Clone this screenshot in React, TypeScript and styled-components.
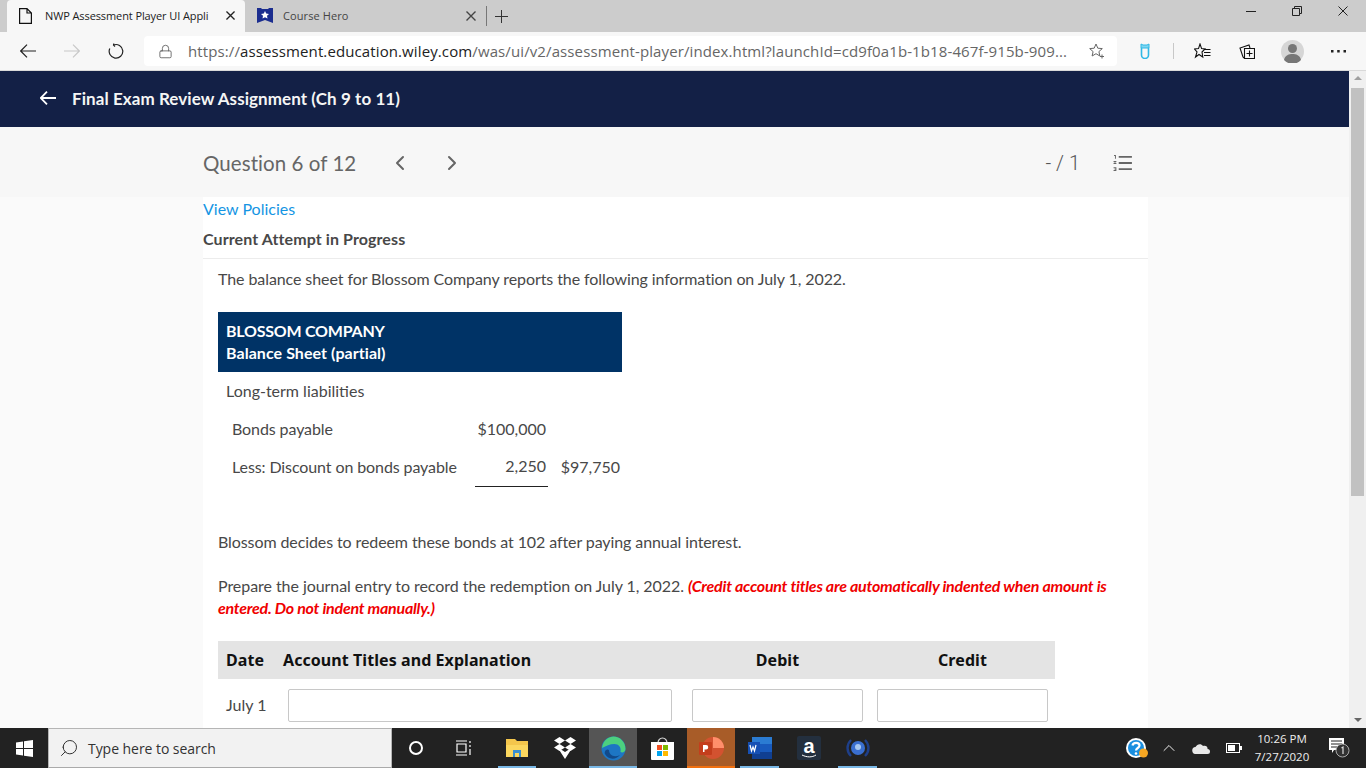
import React from "react";
import styled, { createGlobalStyle } from "styled-components";
import { ChevronLeft, ChevronRight, Lock, ChevronUp, Search } from "lucide-react";

const Global = createGlobalStyle`
  html, body { margin: 0; padding: 0; height: 768px; overflow: hidden; background: #fafafa; }
  * { box-sizing: border-box; }
  #root { width: 1366px; height: 768px; }
`;

const Screen = styled.div`
  width: 1366px;
  height: 768px;
  display: flex;
  flex-direction: column;
  font-family: Lato, "Liberation Sans", sans-serif;
  color: #484848;
`;

/* browser chrome */
const TabStrip = styled.div`
  height: 32px;
  background: #cccccc;
  display: flex;
  align-items: flex-end;
  padding-left: 7px;
  font-family: "Open Sans", "Liberation Sans", sans-serif;
  font-size: 11px;
`;

const Tab = styled.div<{ $active?: boolean }>`
  width: ${(p) => (p.$active ? 238 : 241)}px;
  height: 32px;
  display: flex;
  align-items: center;
  padding: 0 ${(p) => (p.$active ? 10 : 10)}px 1px 12px;
  border-radius: 4px 4px 0 0;
  background: ${(p) => (p.$active ? "#f7f7f7" : "transparent")};
  color: ${(p) => (p.$active ? "#222" : "#444")};
  letter-spacing: ${(p) => (p.$active ? -0.1 : 0.1)}px;
`;

const TabTitle = styled.span<{ $offset: number }>`
  flex: 1;
  margin-left: ${(p) => p.$offset}px;
  white-space: nowrap;
  overflow: hidden;
`;

const NewTab = styled.div`
  display: flex;
  align-items: center;
  height: 20px;
  margin-bottom: 6px;
  padding-left: 7px;
  border-left: 1px solid #777;
`;

const WindowButtons = styled.div`
  margin-left: auto;
  height: 32px;
  display: flex;
  align-items: flex-start;
  gap: 36px;
  padding: 6px 18px 0 0;
`;

const NavBar = styled.div`
  height: 39px;
  background: #f7f7f7;
  border-bottom: 1px solid #d9d9d9;
  display: flex;
  align-items: center;
  padding-left: 20px;
`;

const NavIcons = styled.div`
  width: 124px;
  display: flex;
  align-items: center;
  gap: 28px;
`;

const AddressBox = styled.div`
  width: 973px;
  height: 30px;
  background: #fff;
  border-radius: 4px;
  display: flex;
  align-items: center;
  padding: 0 12px 0 14px;
  font-family: "Open Sans", "Liberation Sans", sans-serif;
  font-size: 15px;
  color: #222;
  white-space: nowrap;
`;

const Url = styled.span`
  margin-left: 15px;
  flex: 1;
  letter-spacing: 0.11px;
  span { color: #666; }
`;

const Tools = styled.div`
  flex: 1;
  display: flex;
  align-items: center;
  padding-left: 23px;
`;

const Divider = styled.div`
  width: 1px;
  height: 16px;
  background: #c8c8c8;
  margin: 0 20px 0 23px;
`;

const Avatar = styled.div`
  width: 23px;
  height: 23px;
  margin-left: 26px;
`;

const MoreDots = styled.div`
  margin-left: 27px;
  display: flex;
`;

/* page */
const Viewport = styled.div`
  flex: 1;
  display: flex;
  min-height: 0;
  overflow: hidden;
`;

const Page = styled.div`
  width: 1349px;
  background: #fafafa;
`;

const Banner = styled.header`
  height: 56px;
  padding-bottom: 2px;
  background: #132046;
  display: flex;
  align-items: center;
  padding-left: 40px;
  color: #f5f5f5;
  font-size: 17px;
  font-weight: 700;
  letter-spacing: 0.07px;
  gap: 16px;
`;

const QuestionBar = styled.div`
  height: 70px;
  background: #f7f7f7;
  display: flex;
  align-items: center;
  padding: 2px 0 0 203px;
  color: #666;
`;

const QuestionTitle = styled.div`
  font-size: 20.5px;
  width: 185px;
  letter-spacing: 0.06px;
`;

const Pager = styled.div`
  display: flex;
  gap: 28px;
`;

const Score = styled.div`
  margin-left: auto;
  font-family: Roboto, "Liberation Sans", sans-serif;
  font-size: 20px;
  font-weight: 300;
  color: #555;
`;

const ListIcon = styled.div`
  margin: 0 217px 0 33px;
  display: flex;
`;

const Content = styled.main`
  margin-left: 203px;
  width: 945px;
  background: #fff;
  height: 600px;
  font-size: 16px;
`;

const PolicyLink = styled.a`
  display: block;
  color: #1595e3;
  line-height: 24px;
  height: 27px;
`;

const Attempt = styled.div`
  font-weight: 700;
  color: #484848;
  font-size: 16px;
  letter-spacing: 0.1px;
  line-height: 24px;
  height: 35px;
  padding-top: 3px;
  border-bottom: 1px solid #ececec;
`;

const Body = styled.div`
  padding: 9px 0 0 15px;
`;

const Para = styled.p<{ $track: number }>`
  margin: 0 0 22px;
  line-height: 22px;
  width: 900px;
  letter-spacing: ${(p) => p.$track}px;
`;

const Red = styled.em`
  color: #f00000;
  font-weight: 700;
  letter-spacing: -0.25px;
`;

const SheetHead = styled.div`
  width: 404px;
  height: 60px;
  background: #003366;
  color: #fff;
  font-weight: 700;
  padding: 8px 8px 0;
  line-height: 22px;
`;

const SheetLine = styled.div<{ $track: number }>`
  letter-spacing: ${(p) => p.$track}px;
`;

const SheetTable = styled.table`
  border-collapse: collapse;
  width: 404px;
  margin-bottom: 44px;
  td { padding: 0 0 2px; height: 38px; }
`;

const Caption = styled.td`
  padding-left: 8px !important;
`;

const RowLabel = styled.td`
  padding-left: 14px !important;
  width: 257px;
  letter-spacing: -0.1px;
`;

const Amount = styled.td<{ $rule?: boolean }>`
  width: 73px;
  text-align: right;
  padding-right: 2px !important;
  border-bottom: ${(p) => (p.$rule ? "1px solid #222" : "none")};
`;

const Total = styled.td`
  text-align: right;
  padding-right: 2px !important;
`;

const EntryHead = styled.div`
  width: 837px;
  height: 38px;
  background: #e4e4e4;
  display: grid;
  grid-template-columns: 65px 402px 185px 185px;
  align-items: center;
  font-family: "Noto Sans", Lato, sans-serif;
  font-size: 16px;
  font-weight: 700;
  letter-spacing: 0.07px;
  color: #111;
`;

const HeadCell = styled.div<{ $center?: boolean; $pad?: number }>`
  text-align: ${(p) => (p.$center ? "center" : "left")};
  padding-left: ${(p) => p.$pad ?? 0}px;
`;

const EntryInput = styled.div<{ $w: number }>`
  width: ${(p) => p.$w}px;
  height: 33px;
  border: 1px solid #c8c8c8;
  border-radius: 2px;
  background: #fff;
`;

const InputRow = styled.div`
  display: flex;
  align-items: center;
  height: 33px;
  margin-top: 10px;
  padding-left: 8px;
`;

const DateText = styled.div`
  width: 62px;
  padding-bottom: 2px;
`;

const Gap = styled.div<{ $w: number }>`
  width: ${(p) => p.$w}px;
  flex: none;
`;

/* scrollbar */
const Scrollbar = styled.div`
  width: 17px;
  background: #f0f0f0;
  display: flex;
  flex-direction: column;
  align-items: center;
  padding-top: 5px;
`;

const Thumb = styled.div`
  width: 13px;
  height: 408px;
  margin-top: 8px;
  background: #c1c1c1;
`;

const Arrow = styled.div<{ $down?: boolean }>`
  width: 0;
  height: 0;
  border-left: 4px solid transparent;
  border-right: 4px solid transparent;
  ${(p) => (p.$down ? "border-top: 4px solid #666; margin-top: auto; margin-bottom: 6px;" : "border-bottom: 4px solid #a0a0a0;")}
`;

/* taskbar */
const Taskbar = styled.footer`
  height: 40px;
  background: #222222;
  display: flex;
  align-items: stretch;
  color: #fff;
`;

const StartSlot = styled.div`
  width: 48px;
  display: flex;
  align-items: center;
  justify-content: center;
`;

const SearchBox = styled.div`
  width: 344px;
  background: #f2f2f2;
  border: 1px solid #b5b5b5;
  border-bottom-color: #aaa;
  display: flex;
  align-items: center;
  padding-left: 10px;
  gap: 9px;
  color: #333;
  font-family: "Open Sans", "Liberation Sans", sans-serif;
  font-size: 14px;
  letter-spacing: -0.05px;
`;

const SearchGlyph = styled(Search)`
  transform: scaleX(-1);
`;

const TaskSlot = styled.div<{ $w?: number; $bg?: string; $under?: string; $inset?: number }>`
  width: ${(p) => p.$w ?? 48}px;
  background: ${(p) => p.$bg ?? "transparent"};
  display: flex;
  align-items: center;
  justify-content: center;
  position: relative;
  &::after {
    content: "";
    position: absolute;
    left: ${(p) => p.$inset ?? 0}px;
    right: ${(p) => p.$inset ?? 0}px;
    bottom: 0;
    height: 2px;
    background: ${(p) => p.$under ?? "transparent"};
  }
`;

const Tray = styled.div`
  margin-left: auto;
  display: flex;
  align-items: center;
`;

const Clock = styled.div`
  width: 64px;
  text-align: center;
  font-family: "Open Sans", "Liberation Sans", sans-serif;
  font-size: 11.5px;
  line-height: 18px;
  color: #eee;
`;

const TrayIcon = styled.div<{ $w: number }>`
  width: ${(p) => p.$w}px;
  display: flex;
  justify-content: center;
  align-items: center;
`;

const urlTail = "/was/ui/v2/assessment-player/index.html?launchId=cd9f0a1b-1b18-467f-915b-909...";

const ArrowGlyph = ({ color, right, w = 1.2 }: { color: string; right?: boolean; w?: number }) => (
  <svg width="16" height="14" viewBox="0 0 16 14" fill="none" stroke={color} strokeWidth={w}>
    <path d={right ? "M0 7h15.200M9 .7 15.300 7 9 13.300" : "M16 7H.8M7 .7.7 7 7 13.300"} />
  </svg>
);

const Cross = ({ size, color, w }: { size: number; color: string; w: number }) => (
  <svg width={size} height={size} viewBox="0 0 10 10" fill="none" stroke={color} strokeWidth={w}>
    <path d="M.5.5l9 9M9.500.5l-9 9" />
  </svg>
);

export default function App() {
  return (
    <Screen>
      <Global />
      <TabStrip>
        <Tab $active>
          <svg width="13" height="16" viewBox="0 0 13 16" fill="none" stroke="#111" strokeWidth="1.2">
            <path d="M.6.6h7.400l4.400 4.400v10.400H.6zM8 .6V5h4.400" />
          </svg>
          <TabTitle $offset={13}>NWP Assessment Player UI Appli</TabTitle>
          <Cross size={9} color="#222" w={1.5} />
        </Tab>
        <Tab>
          <svg width="16" height="15" viewBox="0 0 16 15">
            <path d="M0 0h4l1 1h6l1-1h4v15l-8-3-8 3z" fill="#1b2d8f" />
            <path d="M8 3l1.200 2.600 2.800.3-2 1.900.5 2.800L8 9.200 5.500 10.600l.5-2.800-2-1.900 2.800-.3z" fill="#fff" />
          </svg>
          <TabTitle $offset={10}>Course Hero</TabTitle>
          <Cross size={10} color="#444" w={1.4} />
        </Tab>
        <NewTab>
          <svg width="15" height="15" viewBox="0 0 15 15" fill="none" stroke="#333">
            <path d="M7.500 1v13M1 7.500h13" />
          </svg>
        </NewTab>
        <WindowButtons>
          <svg width="10" height="10" viewBox="0 0 10 10" stroke="#222">
            <path d="M0 5.500h10" />
          </svg>
          <svg width="10" height="10" viewBox="0 0 10 10" fill="none" stroke="#222">
            <path d="M.5 2.500h7v7h-7zM2.500 2.500v-2h7v7h-2" />
          </svg>
          <Cross size={10} color="#222" w={1} />
        </WindowButtons>
      </TabStrip>

      <NavBar>
        <NavIcons>
          <ArrowGlyph color="#222" />
          <ArrowGlyph color="#c8c8c8" right />
          <svg width="16" height="16" viewBox="0 0 16 16" fill="none" stroke="#222" strokeWidth="1.2">
            <path d="M5.500 2a6.800 6.800 0 1 1-3.700 3.500M5.800.5 5.500 2 7 3.500" />
          </svg>
        </NavIcons>
        <AddressBox>
          <Lock size={15} color="#555" strokeWidth={1.3} />
          <Url>
            <span>https://</span>assessment.education.wiley.com<span>{urlTail}</span>
          </Url>
          <svg width="16" height="16" viewBox="0 0 16 16" fill="none" stroke="#666" strokeWidth="1">
            <path d="M7 1l1.800 4.200 4.500.4-3.400 3 1 4.400L7 10.700 3.100 13l1-4.400-3.400-3 4.500-.4z" />
            <path d="M13 11.500v4M11 13.500h4" />
          </svg>
        </AddressBox>
        <Tools>
          <svg width="10" height="16" viewBox="0 0 10 16" fill="none" stroke="#2fb8e6" strokeWidth="1.6">
            <path d="M1.500 5v7a3.500 3.500 0 0 0 7 0V5" />
            <path d="M1 1l2 1h4l2-1v4H1z" fill="#7fd6f0" strokeWidth="1" />
          </svg>
          <Divider />
          <svg width="17" height="16" viewBox="0 0 17 16" fill="none" stroke="#111" strokeWidth="1.1">
            <path d="M6 1l1.600 4.600L11 6 8 9l.8 5L5 11.500 1.500 14 3 9 .5 6l4-.4z" />
            <path d="M10 6.500h6.500M10 9.500h6.500M10 12.500h6.500" />
          </svg>
          <Gap $w={28} />
          <svg width="16" height="16" viewBox="0 0 16 16" fill="none" stroke="#111" strokeWidth="1.1">
            <path d="M5 15l-1-1L1 5l9-3 1 3" />
            <path d="M5.500 5.500h10v10h-10zM10.500 7.500v6M7.500 10.500h6" />
          </svg>
          <Avatar>
            <svg width="23" height="23" viewBox="0 0 23 23">
              <circle cx="11.500" cy="11.500" r="11.500" fill="#d6d6d6" />
              <circle cx="11.500" cy="8.500" r="4.500" fill="#777" />
              <path d="M3 20c1-5 5-6 8.500-6s7.500 1 8.500 6a11.500 11.500 0 0 1-17 0z" fill="#777" />
            </svg>
          </Avatar>
          <MoreDots>
            <svg width="15" height="3" viewBox="0 0 15 3" fill="#222">
              <rect width="2.500" height="2.500" />
              <rect x="6.200" width="2.500" height="2.500" />
              <rect x="12.500" width="2.500" height="2.500" />
            </svg>
          </MoreDots>
        </Tools>
      </NavBar>

      <Viewport>
        <Page>
          <Banner>
            <ArrowGlyph color="#fff" w={1.8} />
            <span>Final Exam Review Assignment (Ch 9 to 11)</span>
          </Banner>
          <QuestionBar>
            <QuestionTitle>Question 6 of 12</QuestionTitle>
            <Pager>
              <ChevronLeft size={24} color="#666" strokeWidth={2} />
              <ChevronRight size={24} color="#666" strokeWidth={2} />
            </Pager>
            <Score>- / 1</Score>
            <ListIcon>
              <svg width="19" height="16" viewBox="0 0 20 17" fill="#666">
                <path d="M6 1h14v2H6zM6 7.500h14v2H6zM6 14h14v2H6z" />
                <path d="M1 0h2v4H2V1H1zM.5 6.500h3v1l-2 1h2v1h-3v-1l2-1h-2zM.5 13h3v4h-3v-1h2v-.5h-1v-1h1V14h-2z" />
              </svg>
            </ListIcon>
          </QuestionBar>
          <Content>
            <PolicyLink>View Policies</PolicyLink>
            <Attempt>Current Attempt in Progress</Attempt>
            <Body>
              <Para $track={-0.085}>The balance sheet for Blossom Company reports the following information on July 1, 2022.</Para>
              <SheetHead>
                <SheetLine $track={-0.23}>BLOSSOM COMPANY</SheetLine>
                <SheetLine $track={0.06}>Balance Sheet (partial)</SheetLine>
              </SheetHead>
              <SheetTable>
                <tbody>
                  <tr>
                    <Caption colSpan={3}>Long-term liabilities</Caption>
                  </tr>
                  <tr>
                    <RowLabel>Bonds payable</RowLabel>
                    <Amount>$100,000</Amount>
                    <Total />
                  </tr>
                  <tr>
                    <RowLabel>Less: Discount on bonds payable</RowLabel>
                    <Amount $rule>2,250</Amount>
                    <Total>$97,750</Total>
                  </tr>
                </tbody>
              </SheetTable>
              <Para $track={-0.097}>Blossom decides to redeem these bonds at 102 after paying annual interest.</Para>
              <Para $track={-0.055}>
                Prepare the journal entry to record the redemption on July 1, 2022. <Red>(Credit account titles are automatically indented when amount is entered. Do not indent manually.)</Red>
              </Para>
              <EntryHead>
                <HeadCell $pad={8}>Date</HeadCell>
                <HeadCell>Account Titles and Explanation</HeadCell>
                <HeadCell $center>Debit</HeadCell>
                <HeadCell $center>Credit</HeadCell>
              </EntryHead>
              <InputRow>
                <DateText>July 1</DateText>
                <EntryInput $w={384} />
                <Gap $w={20} />
                <EntryInput $w={171} />
                <Gap $w={14} />
                <EntryInput $w={171} />
              </InputRow>
            </Body>
          </Content>
        </Page>
        <Scrollbar>
          <Arrow />
          <Thumb />
          <Arrow $down />
        </Scrollbar>
      </Viewport>

      <Taskbar>
        <StartSlot>
          <svg width="17" height="17" viewBox="0 0 17 17" fill="#fff">
            <path d="M0 2.500l7-1V8H0zM8 1.300L17 0v8H8zM0 9h7v6.500l-7-1zM8 9h9v8l-9-1.300z" />
          </svg>
        </StartSlot>
        <SearchBox>
          <SearchGlyph size={20} color="#333" strokeWidth={1.2} />
          <span>Type here to search</span>
        </SearchBox>
        <TaskSlot>
          <svg width="16" height="16" viewBox="0 0 16 16" fill="none" stroke="#fff" strokeWidth="2">
            <circle cx="8" cy="8" r="6" />
          </svg>
        </TaskSlot>
        <TaskSlot>
          <svg width="16" height="16" viewBox="0 0 16 16" fill="none" stroke="#fff" strokeWidth="1.2">
            <path d="M0 1h11M0 15h11M1 4h9v8H1zM14 1v2M14 5v2M14 9v6" />
          </svg>
        </TaskSlot>
        <Gap $w={5} />
        <TaskSlot $under="#79b8e6" $inset={5}>
          <svg width="22" height="18" viewBox="0 0 22 18">
            <path d="M0 0h9l2 2h11v16H0z" fill="#f4c64c" />
            <path d="M0 6h22v12H0z" fill="#fbd75f" />
            <path d="M7 11h8v7h-2v-4H9v4H7z" fill="#3a8fd0" />
          </svg>
        </TaskSlot>
        <TaskSlot>
          <svg width="24" height="22" viewBox="0 0 24 22" fill="#fff">
            <path d="M6.500 0L12 3.500 6.500 7 1 3.500zM17.500 0L23 3.500 17.500 7 12 3.500zM6.500 7L12 10.500 6.500 14 1 10.500zM17.500 7L23 10.500 17.500 14 12 10.500zM12 15l5.500-3.500v2L12 22l-5.500-8.500v-2z" />
          </svg>
        </TaskSlot>
        <TaskSlot $bg="#555" $under="#79b8e6">
          <svg width="25" height="25" viewBox="0 0 25 25">
            <circle cx="12.500" cy="12.500" r="12" fill="#1d76c4" />
            <path d="M1 12C2 4 8 .5 12.500.5 19 .5 24.500 6 24.500 13c0 3-3 4-5 3 1-5-2-8-6-8-5 0-8 2-12.500 4z" fill="#4cd07f" />
            <path d="M8 14c0 5 5 8 11 5-4 5-12 5-15-1-1-2 1-6 4-4z" fill="#124a8a" />
          </svg>
        </TaskSlot>
        <TaskSlot $w={50}>
          <svg width="23" height="24" viewBox="0 0 23 24">
            <path d="M7 7a4.500 5 0 0 1 9 0" fill="none" stroke="#ddd" strokeWidth="1.200" />
            <path d="M0 6h23v17a1 1 0 0 1-1 1H1a1 1 0 0 1-1-1z" fill="#fff" />
            <path d="M6 9h5v5H6z" fill="#f25022" />
            <path d="M12 9h5v5h-5z" fill="#7fba00" />
            <path d="M6 15h5v5H6z" fill="#00a4ef" />
            <path d="M12 15h5v5h-5z" fill="#ffb900" />
          </svg>
        </TaskSlot>
        <TaskSlot $bg="#a85c28" $under="#f07010">
          <svg width="26" height="24" viewBox="0 0 26 24">
            <circle cx="15" cy="12" r="11" fill="#d35230" />
            <path d="M15 12V1a11 11 0 0 1 11 11z" fill="#ff8f6b" />
            <rect x="1" y="6" width="13" height="13" rx="1" fill="#c43e1c" />
            <path d="M5 16V9h3a2 2 0 0 1 0 4.500H6.500V16z" fill="#fff" />
          </svg>
        </TaskSlot>
        <TaskSlot $w={49} $under="#79b8e6" $inset={5}>
          <svg width="24" height="22" viewBox="0 0 24 22">
            <rect x="4" y="0" width="20" height="22" fill="#2b7cd3" />
            <rect x="4" y="7" width="20" height="8" fill="#185abd" />
            <rect x="4" y="15" width="20" height="7" fill="#103f91" />
            <rect x="0" y="5" width="12" height="12" fill="#1650b4" />
            <path d="M2 8l1.500 6 1.500-4 1.500 4 1.500-6" fill="none" stroke="#fff" strokeWidth="1.200" />
          </svg>
        </TaskSlot>
        <TaskSlot $w={49}>
          <svg width="24" height="24" viewBox="0 0 24 24">
            <rect width="24" height="24" rx="2" fill="#232f3e" />
            <text x="12" y="17" textAnchor="middle" fontFamily="Liberation Sans, sans-serif" fontWeight="700" fontSize="20" fill="#fff">a</text>
            <path d="M5 19c5 2.500 10 2.500 14 0" fill="none" stroke="#fff" strokeWidth="1" />
          </svg>
        </TaskSlot>
        <TaskSlot $w={49} $under="#79b8e6" $inset={5}>
          <svg width="24" height="24" viewBox="0 0 24 24">
            <circle cx="12" cy="12" r="7" fill="#3a6fd0" />
            <circle cx="12" cy="11" r="3" fill="#a8c8f0" />
            <path d="M5 4a11 11 0 0 0 0 16M19 4a11 11 0 0 1 0 16" fill="none" stroke="#1e3f8a" strokeWidth="2.400" />
          </svg>
        </TaskSlot>
        <Tray>
          <TrayIcon $w={32}>
            <svg width="24" height="22" viewBox="0 0 24 22">
              <circle cx="11" cy="11" r="10" fill="#fff" />
              <circle cx="11" cy="11" r="8" fill="#1a8fe0" />
              <path d="M7.500 8.500C8 5 14.500 5 14.500 8.500c0 2.500-3.500 2.500-3.500 5" fill="none" stroke="#fff" strokeWidth="2.200" />
              <circle cx="11" cy="16.500" r="1.300" fill="#fff" />
              <circle cx="18.500" cy="16" r="4.500" fill="#f5a623" />
            </svg>
          </TrayIcon>
          <TrayIcon $w={32}>
            <ChevronUp size={20} color="#eee" strokeWidth={1.2} />
          </TrayIcon>
          <TrayIcon $w={32}>
            <svg width="18" height="11" viewBox="0 0 18 11">
              <path d="M4 11a3.500 3.500 0 0 1-.5-7C5 1 9 0 11 3c3-1 5 1 4.500 3a2.500 2.500 0 0 1 0 5z" fill="#e8e8e8" />
            </svg>
          </TrayIcon>
          <TrayIcon $w={33}>
            <svg width="16" height="10" viewBox="0 0 16 10">
              <rect x=".5" y=".5" width="13" height="9" fill="none" stroke="#fff" />
              <rect x="2" y="2" width="7" height="6" fill="#fff" />
              <rect x="14" y="3" width="2" height="4" fill="#fff" />
            </svg>
          </TrayIcon>
          <Clock>
            10:26 PM
            <br />
            7/27/2020
          </Clock>
          <TrayIcon $w={52}>
            <svg width="24" height="22" viewBox="0 0 24 22">
              <path d="M1 1h15v12H6l-2 3v-3H1z" fill="#fff" />
              <path d="M3 4h11M3 7h11M3 10h8" stroke="#222" />
              <circle cx="14.500" cy="13.500" r="6.500" fill="#333" stroke="#aaa" />
              <path d="M13.500 11l1.500-1v7" fill="none" stroke="#ddd" strokeWidth="1.200" />
            </svg>
          </TrayIcon>
        </Tray>
      </Taskbar>
    </Screen>
  );
}
